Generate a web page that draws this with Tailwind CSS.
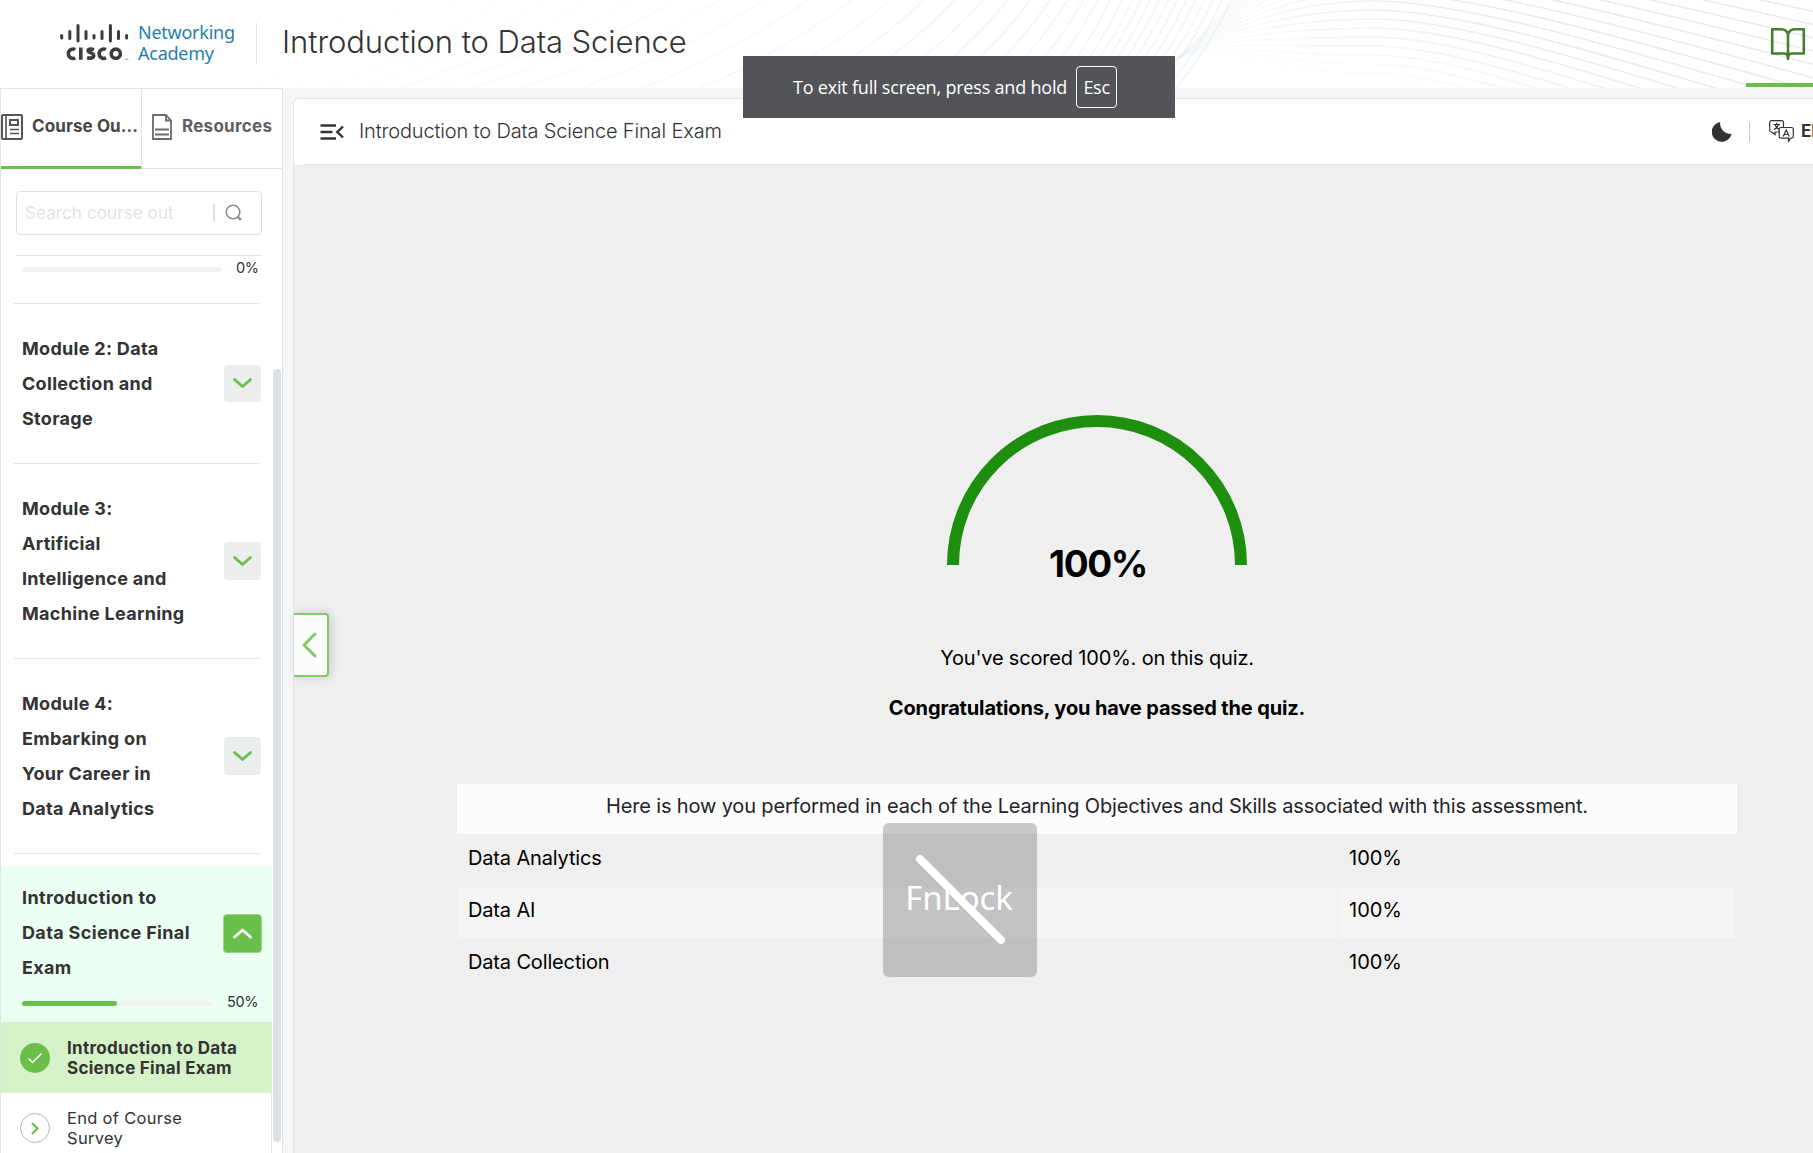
<!DOCTYPE html>
<html lang="en">
<head>
<meta charset="utf-8">
<title>Introduction to Data Science</title>
<script src="https://cdn.jsdelivr.net/npm/@tailwindcss/browser@4"></script>
</head>
<body class="relative flex h-[1153px] w-[1813px] flex-col overflow-hidden bg-[#f5f6f8] font-['Inter',sans-serif] text-[#333]">

<header class="relative flex h-[88px] w-full shrink-0 items-start overflow-hidden bg-white">
  <svg id="waves" class="absolute inset-0" width="1813" height="88" viewBox="0 0 1813 88" fill="none">
    <defs><linearGradient id="fan" gradientUnits="userSpaceOnUse" x1="1172" y1="0" x2="1500" y2="0"><stop offset="0" stop-color="#b4c4d4" stop-opacity=".1"/><stop offset=".3" stop-color="#b4c4d4" stop-opacity=".4"/><stop offset="1" stop-color="#b4c4d4"/></linearGradient></defs>
  </svg>
  <div class="relative flex h-full w-full pl-[60px]">
    <svg class="mt-[24px] h-[38px] w-[70px] shrink-0" viewBox="60 24 70 38" fill="none" stroke="#3a3c40" stroke-linecap="round">
      <g stroke-width="3"><path d="M61.7 35.500v2.500M69.800 31.500v7M78 25.500v15.500M86 31.500v7M94 35.500v2.500M102 31.500v7M110.400 25.500v15.500M118.500 31.500v7M126.600 35.500v2.500"/></g>
      <g stroke-width="3.600" stroke-linecap="butt"><path d="M75.200 49.500a4.700 4.700 0 1 0 0 8.400M80.800 47.500v12.200M94 49.600c-2.500-.8-5.800-.8-5.800 1.200 0 2.600 5.500 1.500 5.500 4.700 0 2.800-3.500 3-6.600 2.200M106 49.500a4.700 4.700 0 1 0 0 8.400"/><circle cx="115.800" cy="53.700" r="4.600"/></g>
      <path d="M125.500 59.300h2.500" stroke-width="1" stroke="#999"/>
    </svg>
    <div class="ml-[8px] mt-[23px] h-[41px] w-[119px] border-r border-[#dfe1e4] font-['Noto_Sans',sans-serif] text-[18px] leading-[20.500px] tracking-[-0.25px] text-[#1f7fab]"><div class="-mt-px">Networking</div><div>Academy</div></div>
    <h1 class="ml-[25px] mt-[22px] text-[31px] font-light leading-[40px] tracking-[-0.08px] whitespace-nowrap"><span>Introduction to Data Science</span></h1>
    <div class="ml-auto flex h-[87px] w-[67px] shrink-0 items-start border-b-4 border-[#6abf4b] pl-[24px] pt-[27px]">
      <svg class="h-[34px] w-[36px] shrink-0" viewBox="0 0 36 34" fill="none" stroke="#467d31" stroke-width="2.600" stroke-linejoin="round"><path d="M18 7.500C17 4 14.500 2.200 11.500 2.200H2.200v24.300h12.300c2 0 3.500 1 3.500 5.500 0-4.500 1.500-5.500 3.500-5.500h12.300V2.200h-9.300C21.500 2.200 19 4 18 7.500v24"/></svg>
    </div>
  </div>
</header>

<div class="flex min-h-0 grow">
  <aside class="relative flex w-[283px] shrink-0 flex-col overflow-hidden border-x border-t border-[#e1e3e6] bg-white">
    <nav class="flex h-[80px] shrink-0 text-[17px] font-bold">
      <div class="flex h-[80px] w-[140px] shrink-0 items-start border-b-[3px] border-[#6abf4b] pt-[25px] text-[#464646]">
        <svg class="h-[26px] w-[22px] shrink-0" viewBox="0 0 22 26" fill="none" stroke="#545454" stroke-width="2"><rect x="1" y="1" width="20" height="24" rx="1"/><path d="M5 1v24M9 15.500h9M9 19.500h9" stroke-width="1.600"/><rect x="9" y="6" width="8" height="5"/></svg>
        <span class="ml-[9px] leading-[24px] tracking-[0.1px] whitespace-nowrap">Course Ou...</span>
      </div>
      <div class="flex h-[80px] w-[141px] shrink-0 items-start border-b border-l border-[#dfe1e6] pl-[10px] pt-[25px] text-[#5f5f5f]">
        <svg class="h-[26px] w-[20px] shrink-0" viewBox="0 0 20 26" fill="none" stroke="#6b6b6b" stroke-width="1.800"><path d="M1 1h13l5 5.500V25H1zM14 1v5.500h5M3 15.500h14M3 20.500h14"/></svg>
        <span class="ml-[10px] leading-[24px] tracking-[0.27px] whitespace-nowrap">Resources</span>
      </div>
    </nav>
    <div class="ml-[15px] mt-[22px] flex h-[44px] w-[246px] shrink-0 items-center rounded border border-[#dcdfe5] pl-[8px]">
      <span class="mt-[2px] w-[188px] text-[17px] tracking-[0.1px] text-[#e3e3e3] whitespace-nowrap">Search course out</span>
      <i class="h-[18px] w-[2px] bg-[#e0e0e0]"></i>
      <svg class="ml-[10px] h-[18px] w-[18px]" viewBox="0 0 18 18" fill="none" stroke="#8c8c8c" stroke-width="1.600"><circle cx="8" cy="8" r="6.800"/><path d="M12.500 12.500l3.500 3.500" stroke-width="2.400"/></svg>
    </div>
    <div class="ml-[15px] mt-[20px] h-px w-[246px] shrink-0 bg-[#e3e4e5]"></div>
    <div class="flex h-[47px] shrink-0 items-start pl-[21px] pt-[2px]">
      <div class="mt-[9px] h-[5px] w-[199px] rounded-full bg-[#f1f1f1]"></div>
      <span class="ml-[15px] text-[14.500px] leading-[20px] tracking-[-0.3px]">0%</span>
    </div>
    <div class="ml-[13px] h-px w-[246px] shrink-0 bg-[#e3e4e5]"></div>

    <div class="flex h-[159px] shrink-0 items-center justify-between pl-[21px] pr-[21px]">
      <div class="-mt-px text-[18px] font-bold leading-[35px] tracking-[0.3px] whitespace-nowrap"><div>Module 2: Data</div><div>Collection and</div><div>Storage</div></div>
      <div class="flex size-[37px] items-center justify-center rounded bg-[#ecedef]"><svg class="h-[11px] w-[19px]" viewBox="0 0 19 11" fill="none" stroke="#6abf4b" stroke-width="2.800" stroke-linecap="round"><path d="M1.500 1.500l8 7 8-7"/></svg></div>
    </div>
    <div class="ml-[13px] h-px w-[246px] shrink-0 bg-[#e3e4e5]"></div>
    <div class="flex h-[194px] shrink-0 items-center justify-between pl-[21px] pr-[21px]">
      <div class="-mt-px text-[18px] font-bold leading-[35px] tracking-[0.3px] whitespace-nowrap"><div>Module 3:</div><div>Artificial</div><div>Intelligence and</div><div>Machine Learning</div></div>
      <div class="flex h-[38px] w-[37px] items-center justify-center rounded bg-[#ecedef]"><svg class="h-[11px] w-[19px]" viewBox="0 0 19 11" fill="none" stroke="#6abf4b" stroke-width="2.800" stroke-linecap="round"><path d="M1.500 1.500l8 7 8-7"/></svg></div>
    </div>
    <div class="ml-[13px] h-px w-[246px] shrink-0 bg-[#e3e4e5]"></div>
    <div class="flex h-[194px] shrink-0 items-center justify-between pl-[21px] pr-[21px]">
      <div class="-mt-px text-[18px] font-bold leading-[35px] tracking-[0.3px] whitespace-nowrap"><div>Module 4:</div><div>Embarking on</div><div>Your Career in</div><div>Data Analytics</div></div>
      <div class="flex h-[38px] w-[37px] items-center justify-center rounded bg-[#ecedef]"><svg class="h-[11px] w-[19px]" viewBox="0 0 19 11" fill="none" stroke="#6abf4b" stroke-width="2.800" stroke-linecap="round"><path d="M1.500 1.500l8 7 8-7"/></svg></div>
    </div>
    <div class="ml-[13px] h-px w-[246px] shrink-0 bg-[#e3e4e5]"></div>
    <div class="mt-[12px] h-[157px] w-[271px] shrink-0 border-b border-[#dfe8dd] bg-[#ebfff3] pt-[15px]">
      <div class="flex items-center justify-between pl-[21px] pr-[10px]">
        <div class="-mt-px text-[18px] font-bold leading-[35px] tracking-[0.35px] whitespace-nowrap"><div>Introduction to</div><div>Data Science Final</div><div>Exam</div></div>
        <div class="flex size-[39px] items-center justify-center rounded border border-[#9bd584] bg-[#6abf4b]"><svg class="h-[11px] w-[19px]" viewBox="0 0 19 11" fill="none" stroke="#fff" stroke-width="2.800" stroke-linecap="round"><path d="M1.500 9l8-7 8 7"/></svg></div>
      </div>
      <div class="flex items-start pl-[21px] pt-[7px]">
        <div class="mt-[9px] h-[5px] w-[190px] rounded-full bg-[#f1f1f1]"><div class="h-full rounded-full bg-[#6abf4b]" style="width:50%"></div></div>
        <span class="ml-[15px] text-[14.500px] leading-[20px] tracking-[-0.3px]">50%</span>
      </div>
    </div>
    <div class="flex h-[70px] w-[271px] shrink-0 items-center bg-[#d6f2c8] pl-[19px]">
      <div class="flex size-[30px] items-center justify-center rounded-full bg-[#6abf4b]"><svg class="h-[12px] w-[14px]" viewBox="0 0 14 12" fill="none" stroke="#fff" stroke-width="1.500"><path d="M.5 6.500L4.500 10.500 13.500 1.500"/></svg></div>
      <div class="ml-[17px] text-[17px] font-bold leading-[20px] tracking-[0.28px] whitespace-nowrap"><div>Introduction to Data</div><div>Science Final Exam</div></div>
    </div>
    <div class="flex h-[70px] w-[271px] shrink-0 items-center border-r border-[#e1e3e6] pl-[19px]">
      <div class="flex size-[30px] items-center justify-center rounded-full border border-[#aab9cc]"><svg class="h-[13px] w-[8px]" viewBox="0 0 8 13" fill="none" stroke="#6abf4b" stroke-width="2.200"><path d="M1 1l5.500 5.500L1 12"/></svg></div>
      <div class="ml-[17px] text-[16.500px] leading-[20px] tracking-[0.3px] whitespace-nowrap"><div>End of Course</div><div>Survey</div></div>
    </div>
    <div class="absolute left-[272px] top-[280px] h-[773px] w-[8px] rounded-full bg-[#dee1e7]"></div>
  </aside>

  <main class="relative ml-[10px] mt-[10px] flex min-w-0 grow flex-col rounded-tl-md border-l border-t border-[#e3e4e6] bg-white">
    <div class="flex h-[66px] shrink-0 items-center pl-[26px]">
      <svg class="h-[16px] w-[24px]" viewBox="0 0 24 16" fill="none" stroke="#333" stroke-width="2.400"><path d="M.500 1.500H16M.500 8h12M.500 14.500H16M23 2.500L17.300 8l5.700 5.500"/></svg>
      <span class="-mt-[2px] ml-[15px] text-[20px] font-light tracking-[-0.15px] whitespace-nowrap">Introduction to Data Science Final Exam</span>
      <svg class="ml-auto h-[20px] w-[20px] shrink-0" viewBox="0 0 20 20" fill="#333"><path d="M8.200 0A10 10 0 1 0 19.600 11.800 10.500 10.500 0 0 1 8.200 0z"/></svg>
      <i class="ml-[17px] h-[20px] w-px bg-[#c8c8c8]"></i>
      <svg class="-mt-[2px] ml-[19px] h-[23px] w-[25px] shrink-0" viewBox="0 0 25 23" fill="none" stroke="#333" stroke-width="1.200"><path d="M14.500 7.500V2.500Q14.500.700 12.700.700H2.500Q.700.700.700 2.500v8Q.700 12 2.500 12L6 14.500V12h4"/><path d="M12 7.500h10.500q1.800 0 1.800 1.800v7q0 1.800-1.800 1.800h-1L19.500 22v-3.900H12q-1.800 0-1.800-1.800v-7q0-1.800 1.800-1.800zM14.200 16.500l3-6.500 3 6.500M15.200 14.500h4M4.500 4.500h6.500M7.700 2.800v1.700M5 9.500q3.500-1.500 4.300-5M6 4.500q1 3.500 4 5"/></svg>
      <span class="ml-[7px] w-[12px] overflow-hidden text-[17px] font-bold whitespace-nowrap">EN</span>
    </div>
    <section class="relative flex grow flex-col items-center bg-[#efefef] text-black">
      <div class="absolute left-[10px] right-0 top-[-1px] h-px bg-[#e3e4e6]"></div>
      <div class="absolute left-0 top-[448px] flex h-[64px] w-[35px] items-center rounded-r border-y-2 border-r-2 border-[#83c96b] bg-[#fcfcfc] pl-[8px] shadow-[2px_0_10px_rgba(0,0,0,0.15)]"><svg class="h-[26px] w-[15px]" viewBox="0 0 15 26" fill="none" stroke="#83c96b" stroke-width="3" stroke-linecap="round"><path d="M13 2L2 13l11 11"/></svg></div>
      <div class="ml-[87px] flex w-[1280px] flex-col items-center">
        <svg class="mt-[250px] h-[150px] w-[300px]" viewBox="0 0 300 150" fill="none" stroke="#1d8e0e" stroke-width="12"><path d="M6 150a144 144 0 0 1 288 0"/></svg>
        <div class="ml-[2px] mt-[-25px] text-[37px] font-bold leading-[48px] tracking-[-1.4px]"><span>100%</span></div>
        <div class="mt-[56px] text-[20px] leading-[28px] tracking-[-0.18px]"><span>You've scored 100%. on this quiz.</span></div>
        <div class="mt-[22px] text-[20px] font-bold leading-[28px] tracking-[-0.14px]"><span>Congratulations, you have passed the quiz.</span></div>
        <div class="mt-[62px] h-[50px] w-[1280px] bg-[#fcfcfc] text-center text-[20px] leading-[45px] tracking-[-0.16px] text-[#23232a]"><span>Here is how you performed in each of the Learning Objectives and Skills associated with this assessment.</span></div>
        <div class="mt-[2px] grid w-[1276px] grid-cols-[878px_396px] gap-[2px] text-[20px] leading-[45px] tracking-[-0.15px]">
          <div class="h-[50px] pl-[9px]"><span>Data Analytics</span></div><div class="h-[50px] pl-[10px] tracking-normal"><span>100%</span></div>
          <div class="h-[50px] bg-[#f4f4f4] pl-[9px]"><span>Data AI</span></div><div class="h-[50px] bg-[#f4f4f4] pl-[10px] tracking-normal"><span>100%</span></div>
          <div class="h-[50px] pl-[9px]"><span>Data Collection</span></div><div class="h-[50px] pl-[10px] tracking-normal"><span>100%</span></div>
        </div>
      </div>
    </section>
  </main>
</div>

<div class="absolute left-[743px] top-[56px] flex h-[62px] w-[432px] items-center bg-[#494b51]/95 pl-[50px] font-['Open_Sans',sans-serif] text-[18px] text-white">
  <span class="tracking-[-0.2px] whitespace-nowrap">To exit full screen, press and hold</span>
  <span class="ml-[9px] flex h-[42px] w-[41px] items-center justify-center rounded-sm border-[1.500px] border-white tracking-[-0.3px]">Esc</span>
</div>

<div class="absolute left-[883px] top-[823px] flex h-[154px] w-[154px] items-center justify-center rounded-md bg-black/20 font-['Noto_Sans',sans-serif] text-[33px] tracking-[-0.1px] text-white">
  <span class="-ml-[2px] -mt-[4px]">FnLock</span>
  <svg class="absolute inset-0" width="154" height="154" viewBox="0 0 154 154" stroke="#fff" stroke-width="8" stroke-linecap="round"><path d="M37 36l81 81"/></svg>
</div>

<script>
const waves = document.getElementById('waves');
const add = (d, o, stroke) => {
  const p = document.createElementNS('http://www.w3.org/2000/svg', 'path');
  p.setAttribute('d', d); p.setAttribute('stroke', stroke); p.setAttribute('stroke-opacity', o); p.setAttribute('stroke-width', 1.4);
  waves.appendChild(p);
};
// rising strands, tightening towards the knot
for (let x = 60; x < 1240; x += x < 800 ? 44 : Math.max(9, 44 - (x - 800) * 0.105)) {
  const w = x < 700 ? 90 + x / 6 : Math.max(55, 205 - (x - 700) * 0.36);
  add(`M${x - w} 88Q${x - w * .4} 48 ${x} 0`, Math.min(.18, .02 + x * x / 6e6), '#b4c4d4');
}
// strands fanning out to the right
for (let j = -9; j < 9; j++) {
  const y = 10 + 9 * j;
  add(`M1172 62C1215 ${34 + j * .5} 1280 ${y + 2} 1367 ${y}S1600 ${y + 42 + j * 2} 1880 ${y + 128 + j * 5}`, Math.max(.08, .36 - Math.max(0, j) * .035), 'url(#fan)');
}
</script>
</body>
</html>
